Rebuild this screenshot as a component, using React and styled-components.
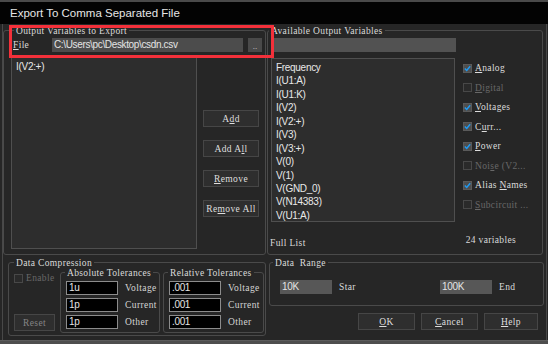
import React from "react";
import styled, { createGlobalStyle } from "styled-components";

const Global = createGlobalStyle`
  html, body { margin: 0; padding: 0; background: #262626; }
  body { width: 548px; height: 344px; overflow: hidden; }
  * { box-sizing: border-box; }
`;

const SANS = `"Liberation Sans", Arial, sans-serif`;
const BITMAP = `"Liberation Serif", "Times New Roman", serif`;

const Window = styled.div`
  position: relative;
  width: 548px;
  height: 344px;
  display: flex;
  flex-direction: column;
  background: #262626;
  font-family: ${BITMAP};
  color: #dadada;
`;

const TopEdge = styled.div`
  height: 2px;
  background: #4a4a4a;
`;

const TitleBar = styled.div`
  height: 22px;
  background: #030303;
  display: flex;
  align-items: center;
  padding-left: 10px;
  font-family: ${SANS};
  font-size: 11.5px;
  color: #e6e6e6;
`;

const Body = styled.div`
  flex: 1;
  margin: 0 1px 0 2px;
  border-left: 1px solid #484848;
  border-right: 1px solid #484848;
  display: flex;
  flex-direction: column;
`;

const BottomEdge = styled.div`
  height: 4px;
  background: #4e4e4e;
  border-top: 1px solid #5c5c5c;
`;

const Group = styled.div`
  position: relative;
  width: ${(p) => p.$w}px;
  height: ${(p) => p.$h}px;
  margin-left: ${(p) => p.$ml || 0}px;
  border: 1px solid #4a4a4a;
  border-radius: 3px;
  display: flex;
  flex-direction: column;
`;

const Legend = styled.span`
  position: absolute;
  top: -4px;
  left: ${(p) => p.$l}px;
  padding: 0 2px;
  background: #262626;
  font-family: ${BITMAP};
  font-size: 9.5px;
  line-height: 9px;
  letter-spacing: 0.35px;
  color: #dadada;
  white-space: pre;
`;

const U = styled.span`
  text-decoration: underline;
`;

const TopRow = styled.div`
  display: flex;
  margin-top: 6px;
`;

const FileRow = styled.div`
  display: flex;
  align-items: center;
  height: 14px;
  margin-top: 7px;
`;

const FileLabel = styled.span`
  width: 39px;
  margin-left: 9px;
  font-size: 9.5px;
  letter-spacing: 0.35px;
`;

const TextField = styled.div`
  width: ${(p) => p.$w}px;
  height: 14px;
  margin-left: ${(p) => p.$ml || 0}px;
  background: ${(p) => p.$bg || "#4c4c4c"};
  border: ${(p) => (p.$framed ? "1px solid #8c8c8c" : "none")};
  font-family: ${SANS};
  font-size: 10px;
  line-height: 14px;
  letter-spacing: -0.35px;
  color: #e4e4e4;
  padding-left: 2px;
  white-space: nowrap;
  overflow: hidden;
  display: flex;
  align-items: center;
`;

const SmallButton = styled.div`
  width: 14px;
  height: 14px;
  margin-left: 5px;
  background: #4a4a4a;
  color: #cfcfcf;
  font-size: 9px;
  display: flex;
  align-items: flex-end;
  justify-content: center;
  line-height: 12px;
`;

const MainRow = styled.div`
  display: flex;
  margin-top: 5px;
`;

const ListBox = styled.div`
  width: ${(p) => p.$w}px;
  height: ${(p) => p.$h}px;
  margin-left: ${(p) => p.$ml}px;
  background: #2d2d2d;
  border: 1px solid #4f4f4f;
  padding: 2px 0 0 4px;
  font-family: ${SANS};
  font-size: 10px;
  letter-spacing: -0.3px;
  color: #e8e8e8;
  display: flex;
  flex-direction: column;
`;

const ListItem = styled.div`
  height: 13.45px;
  line-height: 13.45px;
  white-space: nowrap;
`;

const ButtonColumn = styled.div`
  display: flex;
  flex-direction: column;
  margin-left: 6px;
  padding-top: 53px;
  gap: 13px;
`;

const Button = styled.div`
  width: ${(p) => p.$w}px;
  height: 17px;
  background: #2e2e2e;
  border: 1px solid #464646;
  display: flex;
  align-items: center;
  justify-content: center;
  font-family: ${BITMAP};
  font-size: 9.5px;
  letter-spacing: 0.4px;
  color: ${(p) => (p.$disabled ? "#858585" : "#dedede")};
  white-space: nowrap;
`;

const FilterRow = styled.div`
  margin-top: 7px;
  margin-left: 3px;
`;

const RightMain = styled.div`
  display: flex;
  margin-top: 6px;
`;

const CheckColumn = styled.div`
  display: flex;
  flex-direction: column;
  margin-left: 8px;
  padding-top: 4px;
  gap: 7.5px;
`;

const CheckRow = styled.div`
  display: flex;
  align-items: center;
  height: 12px;
  gap: 3px;
  font-family: ${BITMAP};
  font-size: 9.5px;
  letter-spacing: 0.35px;
  color: ${(p) => (p.$disabled ? "#686868" : "#dcdcdc")};
  white-space: nowrap;
`;

const Box = styled.div`
  width: 9px;
  height: 9px;
  border: 1px solid ${(p) => (p.$checked ? "#5a5a5a" : "#484848")};
  background: ${(p) => (p.$checked ? "#4e4e4e" : "#2a2a2a")};
  display: flex;
  align-items: center;
  justify-content: center;
`;

const Footer = styled.div`
  display: flex;
  justify-content: space-between;
  padding: 0 2px 0 2px;
  margin-top: 16px;
  font-size: 9.5px;
  letter-spacing: 0.35px;
`;

const FooterRight = styled.span`
  margin-top: -3px;
  margin-right: 24px;
`;

const BottomRow = styled.div`
  display: flex;
  margin-top: 7px;
`;

const CompressionInner = styled.div`
  display: flex;
  padding-top: 9px;
`;

const EnableColumn = styled.div`
  width: 46px;
  display: flex;
  flex-direction: column;
  justify-content: space-between;
  padding-left: 5px;
  height: 59px;
`;

const TolInner = styled.div`
  display: flex;
  flex-direction: column;
  gap: 3px;
  padding: 8px 0 0 5px;
`;

const TolRow = styled.div`
  display: flex;
  align-items: center;
`;

const TolLabel = styled.span`
  margin-left: 7px;
  font-size: 9.5px;
  letter-spacing: 0.4px;
  color: #d4d4d4;
`;

const RangeColumn = styled.div`
  display: flex;
  flex-direction: column;
  margin-left: 3px;
`;

const RangeInner = styled.div`
  display: flex;
  align-items: center;
  padding: 17px 0 0 10px;
`;

const RangeLabel = styled.span`
  width: ${(p) => p.$w}px;
  padding-left: 7px;
  font-size: 9.5px;
  letter-spacing: 0.4px;
`;

const DialogButtons = styled.div`
  display: flex;
  justify-content: flex-end;
  gap: 6px;
  margin-top: 7px;
  padding-right: 6px;
`;

const Annotation = styled.div`
  position: absolute;
  left: 9px;
  top: 25px;
  width: 265px;
  height: 33px;
  border: 3px solid #f3303a;
  pointer-events: none;
`;

const Check = () => (
  <svg width="7" height="7" viewBox="0 0 7 7">
    <path d="M0.8 3.6 L2.7 5.5 L6.2 1.2" stroke="#1f9cf5" strokeWidth="1.4" fill="none" />
  </svg>
);

const CheckItem = ({ checked, disabled, children }) => (
  <CheckRow $disabled={disabled}>
    <Box $checked={checked}>{checked && <Check />}</Box>
    <span>{children}</span>
  </CheckRow>
);

const available = [
  "Frequency",
  "I(U1:A)",
  "I(U1:K)",
  "I(V2)",
  "I(V2:+)",
  "I(V3)",
  "I(V3:+)",
  "V(0)",
  "V(1)",
  "V(GND_0)",
  "V(N14383)",
  "V(U1:A)",
];

const TolGroup = ({ title, w, ml, values }) => (
  <Group $w={w} $h={61} $ml={ml}>
    <Legend $l={4}>{title}</Legend>
    <TolInner>
      {values.map((v, i) => (
        <TolRow key={i}>
          <TextField $w={52} $bg="#000" $framed>
            {v}
          </TextField>
          <TolLabel>{["Voltage", "Current", "Other"][i]}</TolLabel>
        </TolRow>
      ))}
    </TolInner>
  </Group>
);

export default function App() {
  return (
    <>
      <Global />
      <Window>
        <TopEdge />
        <TitleBar>Export To Comma Separated File</TitleBar>
        <Body>
          <TopRow>
            <Group $w={263} $h={225}>
              <Legend $l={10}>Output Variables to Export</Legend>
              <FileRow>
                <FileLabel>
                  <U>F</U>ile
                </FileLabel>
                <TextField $w={191}>C:\Users\pc\Desktop\csdn.csv</TextField>
                <SmallButton>..</SmallButton>
              </FileRow>
              <MainRow>
                <ListBox $w={186} $h={192} $ml={7}>
                  <ListItem>I(V2:+)</ListItem>
                </ListBox>
                <ButtonColumn>
                  <Button $w={56}>
                    A<U>d</U>d
                  </Button>
                  <Button $w={56}>
                    Add A<U>l</U>l
                  </Button>
                  <Button $w={56}>
                    <U>R</U>emove
                  </Button>
                  <Button $w={56}>
                    Re<U>m</U>ove All
                  </Button>
                </ButtonColumn>
              </MainRow>
            </Group>
            <Group $w={276} $h={225} $ml={1}>
              <Legend $l={1}>Available Output Variables</Legend>
              <FilterRow>
                <TextField $w={185} $bg="#525252" />
              </FilterRow>
              <RightMain>
                <ListBox $w={184} $h={164} $ml={3}>
                  {available.map((a) => (
                    <ListItem key={a}>{a}</ListItem>
                  ))}
                </ListBox>
                <CheckColumn>
                  <CheckItem checked>
                    <U>A</U>nalog
                  </CheckItem>
                  <CheckItem disabled>
                    <U>D</U>igital
                  </CheckItem>
                  <CheckItem checked>
                    <U>V</U>oltages
                  </CheckItem>
                  <CheckItem checked>
                    C<U>u</U>rr...
                  </CheckItem>
                  <CheckItem checked>
                    <U>P</U>ower
                  </CheckItem>
                  <CheckItem disabled>
                    Noi<U>s</U>e (V2...
                  </CheckItem>
                  <CheckItem checked>
                    Alias <U>N</U>ames
                  </CheckItem>
                  <CheckItem disabled>
                    <U>S</U>ubcircuit ...
                  </CheckItem>
                </CheckColumn>
              </RightMain>
              <Footer>
                <span>Full List</span>
                <FooterRight>24 variables</FooterRight>
              </Footer>
            </Group>
          </TopRow>
          <BottomRow>
            <Group $w={258} $h={74} $ml={5}>
              <Legend $l={5}>Data Compression</Legend>
              <CompressionInner>
                <EnableColumn>
                  <CheckItem disabled>Enable</CheckItem>
                  <Button $w={41} $disabled>
                    Reset
                  </Button>
                </EnableColumn>
                <TolGroup title="Absolute Tolerances" w={100} ml={5} values={["1u", "1p", "1p"]} />
                <TolGroup title="Relative Tolerances" w={101} ml={3} values={[".001", ".001", ".001"]} />
              </CompressionInner>
            </Group>
            <RangeColumn>
              <Group $w={275} $h={44}>
                <Legend $l={3}>{"Data  Range"}</Legend>
                <RangeInner>
                  <TextField $w={52} $bg="#575757">10K</TextField>
                  <RangeLabel $w={108}>Star</RangeLabel>
                  <TextField $w={52} $bg="#575757">100K</TextField>
                  <RangeLabel $w={40}>End</RangeLabel>
                </RangeInner>
              </Group>
              <DialogButtons>
                <Button $w={57}>
                  <U>O</U>K
                </Button>
                <Button $w={57}>
                  <U>C</U>ancel
                </Button>
                <Button $w={54}>
                  <U>H</U>elp
                </Button>
              </DialogButtons>
            </RangeColumn>
          </BottomRow>
        </Body>
        <BottomEdge />
        <Annotation />
      </Window>
    </>
  );
}
